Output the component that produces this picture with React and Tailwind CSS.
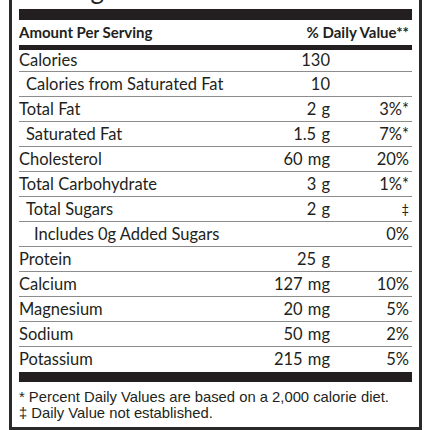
const rows = [
  { name: "Calories", amount: "130", dv: "", indent: 0, first: true },
  { name: "Calories from Saturated Fat", amount: "10", dv: "", indent: 1 },
  { name: "Total Fat", amount: "2 g", dv: "3%*", indent: 0 },
  { name: "Saturated Fat", amount: "1.5 g", dv: "7%*", indent: 1 },
  { name: "Cholesterol", amount: "60 mg", dv: "20%", indent: 0 },
  { name: "Total Carbohydrate", amount: "3 g", dv: "1%*", indent: 0 },
  { name: "Total Sugars", amount: "2 g", dv: "‡", indent: 1, small: true },
  { name: "Includes 0g Added Sugars", amount: "", dv: "0%", indent: 2 },
  { name: "Protein", amount: "25 g", dv: "", indent: 0 },
  { name: "Calcium", amount: "127 mg", dv: "10%", indent: 0 },
  { name: "Magnesium", amount: "20 mg", dv: "5%", indent: 0 },
  { name: "Sodium", amount: "50 mg", dv: "2%", indent: 0 },
  { name: "Potassium", amount: "215 mg", dv: "5%", indent: 0, last: true },
];

const indents = ["pl-0", "pl-[7px]", "pl-[15px]"];

function App() {
  return (
    <div className="w-[430px] h-[430px] bg-white overflow-hidden pl-[9px] pr-[8px] text-[#231f20]">
      <div
        className="border-x-[3px] border-b-[3px] border-[#2a2a2a] px-[7px]"
        style={{ fontFamily: "Lato, 'Open Sans', sans-serif" }}
      >
        {/* title, mostly scrolled off the top */}
        <div className="h-[9px] overflow-hidden flex items-end">
          <div className="text-[26px] leading-[26px] whitespace-nowrap mb-[7px]">
            Servings Per Container 12
          </div>
        </div>
        <div className="h-[11px] bg-[#231f20]" />

        {/* HEADER */}
        <div className="h-[25px] flex items-center justify-between text-[15px] font-bold pr-[3px]">
          <span>Amount Per Serving</span>
          <span>% Daily Value**</span>
        </div>
        <div className="h-[5px] bg-[#231f20]" />

        {/* ROWS */}
        {rows.map((r) => (
          <div
            key={r.name}
            className={`flex items-center text-[16.5px] leading-none ${
              r.first ? "h-[22px]" : "h-[25px]"
            } ${r.last ? "" : "border-b border-[#8c8c8c]"}`}
          >
            <span className={`flex-1 whitespace-nowrap ${indents[r.indent]}`}>
              {r.name}
            </span>
            <span className="w-[100px] text-right [word-spacing:1px]">{r.amount}</span>
            <span className={`w-[82px] text-right pr-[3px] ${r.small ? "text-[13px]" : ""}`}>
              {r.dv}
            </span>
          </div>
        ))}
        <div className="h-[10px] bg-[#231f20]" />

        {/* FOOTNOTES */}
        <div
          className="pt-[7px] pb-[6px] text-[14.8px] leading-[16px]"
          style={{ fontFamily: "'Liberation Sans', Arial, sans-serif" }}
        >
          <div>* Percent Daily Values are based on a 2,000 calorie diet.</div>
          <div>‡ Daily Value not established.</div>
        </div>
      </div>
    </div>
  );
}

export default App;
